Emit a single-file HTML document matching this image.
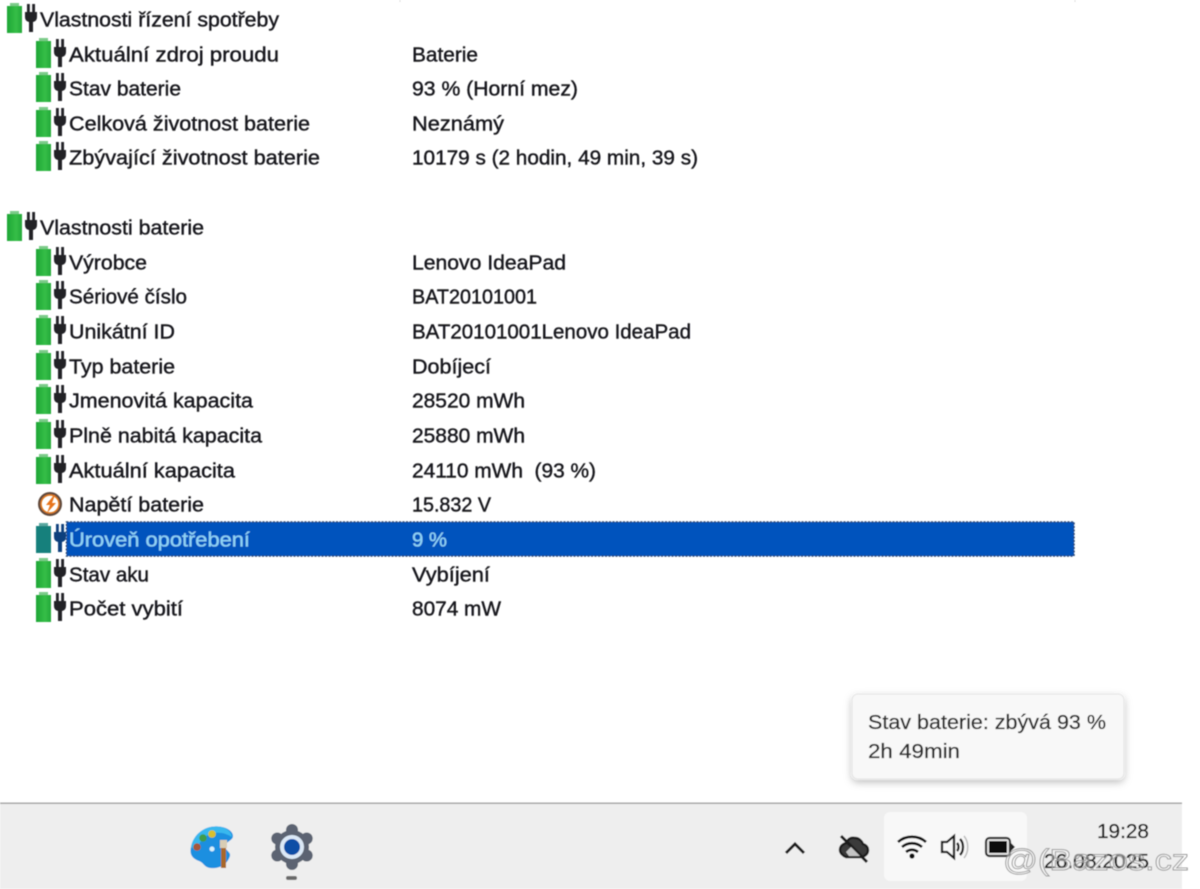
<!DOCTYPE html>
<html><head><meta charset="utf-8">
<style>
html,body{margin:0;padding:0;background:#fff;width:1200px;height:889px;overflow:hidden}
svg{display:block}
text{font-family:"Liberation Sans","DejaVu Sans",sans-serif;font-size:20px}
.t text{fill:#15151c;stroke:#15151c;stroke-width:.4}
.soft{filter:url(#b)}
</style></head><body>
<svg width="1200" height="889" viewBox="0 0 1200 889" xmlns="http://www.w3.org/2000/svg">
<defs>
<filter id="b" x="-2%" y="-2%" width="104%" height="104%"><feGaussianBlur stdDeviation="0.5"/></filter>
<filter id="sh" x="-10%" y="-20%" width="120%" height="150%"><feDropShadow dx="0" dy="3" stdDeviation="4" flood-color="#000" flood-opacity=".25"/></filter>
<linearGradient id="bg" x1="0" x2="1" y1="0" y2="0"><stop offset="0" stop-color="#1fa636"/><stop offset=".6" stop-color="#35be47"/><stop offset="1" stop-color="#25a93a"/></linearGradient>
<symbol id="ic" viewBox="0 0 32 32" width="32" height="32" overflow="visible">
<rect x="3" y="0" width="9" height="4" fill="#7ccb89"/>
<rect x="0" y="3" width="15" height="27" fill="url(#bg)"/>
<path d="M20 1h2.800v9H20zM25.200 1H28v9h-2.800z" fill="#222226"/>
<path d="M18 9h12v5q0 4-4 5v10h-4V19q-4-1-4-5z" fill="#222226"/>
</symbol>
<symbol id="ics" viewBox="0 0 32 32" width="32" height="32" overflow="visible">
<rect x="3" y="0" width="9" height="4" fill="#5aa7a0"/>
<rect x="0" y="3" width="15" height="27" fill="#16807c"/>
<path d="M20 1h2.800v9H20zM25.200 1H28v9h-2.800z" fill="#0f3f7d"/>
<path d="M18 9h12v5q0 4-4 5v10h-4V19q-4-1-4-5z" fill="#0f3f7d"/>
</symbol>
</defs>
<rect width="1200" height="889" fill="#fff"/>
<g class="soft">
<path d="M400 0v2M1075 0v2" stroke="#ddd"/>
<use href="#ic" x="7" y="3"/>
<use href="#ic" x="36" y="38"/>
<use href="#ic" x="36" y="72"/>
<use href="#ic" x="36" y="107"/>
<use href="#ic" x="36" y="141"/>
<use href="#ic" x="7" y="211"/>
<use href="#ic" x="36" y="246"/>
<use href="#ic" x="36" y="280"/>
<use href="#ic" x="36" y="315"/>
<use href="#ic" x="36" y="350"/>
<use href="#ic" x="36" y="384"/>
<use href="#ic" x="36" y="419"/>
<use href="#ic" x="36" y="454"/>
<use href="#ic" x="36" y="558"/>
<use href="#ic" x="36" y="592"/>
<!-- voltage icon -->
<circle cx="50" cy="504" r="10.500" fill="none" stroke="#5f4a3c" stroke-width="3"/>
<circle cx="50" cy="504" r="9" fill="none" stroke="#e0781e" stroke-width="1.500"/>
<path d="M54 495l-8 10h4l-3 8 9-10h-4l3-8z" fill="#e8751a"/>
<!-- selection -->
<rect x="66.500" y="522" width="1007.500" height="34" fill="#0453bd" stroke="#2d4a72" stroke-width="1.500" stroke-dasharray="2 1.500"/>
<use href="#ics" x="36" y="523"/>
<g class="t" transform="translate(0,.5)">
<text x="40" y="26" textLength="239" lengthAdjust="spacingAndGlyphs">Vlastnosti řízení spotřeby</text>
<text x="69" y="61" textLength="210" lengthAdjust="spacingAndGlyphs">Aktuální zdroj proudu</text>
<text x="69" y="95" textLength="112" lengthAdjust="spacingAndGlyphs">Stav baterie</text>
<text x="69" y="130" textLength="241" lengthAdjust="spacingAndGlyphs">Celková životnost baterie</text>
<text x="69" y="164" textLength="251" lengthAdjust="spacingAndGlyphs">Zbývající životnost baterie</text>
<text x="40" y="234" textLength="164" lengthAdjust="spacingAndGlyphs">Vlastnosti baterie</text>
<text x="69" y="269" textLength="78" lengthAdjust="spacingAndGlyphs">Výrobce</text>
<text x="69" y="303" textLength="118" lengthAdjust="spacingAndGlyphs">Sériové číslo</text>
<text x="69" y="338" textLength="106" lengthAdjust="spacingAndGlyphs">Unikátní ID</text>
<text x="69" y="373" textLength="106" lengthAdjust="spacingAndGlyphs">Typ baterie</text>
<text x="69" y="407" textLength="184" lengthAdjust="spacingAndGlyphs">Jmenovitá kapacita</text>
<text x="69" y="442" textLength="193" lengthAdjust="spacingAndGlyphs">Plně nabitá kapacita</text>
<text x="69" y="477" textLength="166" lengthAdjust="spacingAndGlyphs">Aktuální kapacita</text>
<text x="69" y="511" textLength="135" lengthAdjust="spacingAndGlyphs">Napětí baterie</text>
<text x="69" y="581" textLength="80" lengthAdjust="spacingAndGlyphs">Stav aku</text>
<text x="69" y="615" textLength="114" lengthAdjust="spacingAndGlyphs">Počet vybití</text>

<text x="412" y="61" textLength="66" lengthAdjust="spacingAndGlyphs">Baterie</text>
<text x="412" y="95" textLength="166" lengthAdjust="spacingAndGlyphs">93 % (Horní mez)</text>
<text x="412" y="130" textLength="92" lengthAdjust="spacingAndGlyphs">Neznámý</text>
<text x="412" y="164" textLength="286" lengthAdjust="spacingAndGlyphs">10179 s (2 hodin, 49 min, 39 s)</text>
<text x="412" y="269" textLength="154" lengthAdjust="spacingAndGlyphs">Lenovo IdeaPad</text>
<text x="412" y="303" textLength="125" lengthAdjust="spacingAndGlyphs">BAT20101001</text>
<text x="412" y="338" textLength="279" lengthAdjust="spacingAndGlyphs">BAT20101001Lenovo IdeaPad</text>
<text x="412" y="373" textLength="79" lengthAdjust="spacingAndGlyphs">Dobíjecí</text>
<text x="412" y="407" textLength="113" lengthAdjust="spacingAndGlyphs">28520 mWh</text>
<text x="412" y="442" textLength="113" lengthAdjust="spacingAndGlyphs">25880 mWh</text>
<text x="412" y="477" textLength="184" lengthAdjust="spacingAndGlyphs" xml:space="preserve">24110 mWh  (93 %)</text>
<text x="412" y="511" textLength="79" lengthAdjust="spacingAndGlyphs">15.832 V</text>
<text x="412" y="581" textLength="78" lengthAdjust="spacingAndGlyphs">Vybíjení</text>
<text x="412" y="615" textLength="89" lengthAdjust="spacingAndGlyphs">8074 mW</text>
</g>
<text x="69" y="546.500" textLength="181" lengthAdjust="spacingAndGlyphs" fill="#8fd3f5" stroke="#8fd3f5" stroke-width=".3">Úroveň opotřebení</text>
<text x="412" y="546.500" textLength="35" lengthAdjust="spacingAndGlyphs" fill="#8fd3f5" stroke="#8fd3f5" stroke-width=".3">9 %</text>

<!-- taskbar -->
<rect x="0" y="803" width="1182" height="86" fill="#eeeeee"/>
<rect x="0" y="802.500" width="1182" height="1.500" fill="#a8a8a8"/>
<rect x="884" y="812" width="143" height="69" rx="6" fill="#f8f8f8"/>

<!-- tooltip -->
<rect x="852" y="694" width="272" height="85" rx="6" fill="#f8f8f8" stroke="#e4e4e4" filter="url(#sh)"/>
<text x="868" y="729" textLength="238" lengthAdjust="spacingAndGlyphs" fill="#2e2e2e" stroke="#2e2e2e" stroke-width=".3">Stav baterie: zbývá 93 %</text>
<text x="868" y="758" textLength="92" lengthAdjust="spacingAndGlyphs" fill="#2e2e2e" stroke="#2e2e2e" stroke-width=".3">2h 49min</text>

<!-- palette -->
<path d="M222 827c-14-3-28 5-31 20-2 9 3 12 8 14 5 2 5 6 11 7 9 1 17-3 20-12 1-4-4-5-5-9-1-5 8-6 8-11 0-4-5-8-11-9z" fill="#1a8fe0"/>
<path d="M222 827c-14-3-28 5-31 20l6 4c2-12 12-20 25-18 5 1 8 3 10 4 0-4-5-9-10-10z" fill="#37b8ee"/>
<circle cx="197" cy="847" r="3.800" fill="#a5583a"/>
<circle cx="203" cy="838" r="3.800" fill="#3f9c4a"/>
<circle cx="212" cy="834" r="3.800" fill="#d9c02f"/>
<circle cx="212" cy="849" r="2.500" fill="#d8f1fd"/>
<rect x="220" y="840" width="7" height="8" fill="#d9cdb4"/>
<rect x="221" y="848" width="5" height="20" fill="#a8682a"/>
<!-- gear -->
<g fill="#5b6472">
<circle cx="292" cy="847" r="17"/>
<circle cx="292" cy="830" r="6"/><circle cx="292" cy="864" r="6"/>
<circle cx="277.300" cy="838.500" r="6"/><circle cx="306.700" cy="838.500" r="6"/>
<circle cx="277.300" cy="855.500" r="6"/><circle cx="306.700" cy="855.500" r="6"/>
</g>
<circle cx="292" cy="847" r="12" fill="#dbe8f6"/>
<circle cx="292" cy="847" r="8" fill="#0d4ea6"/>
<rect x="286" y="876" width="11" height="4" rx="2" fill="#6a6a6a"/>

<!-- chevron -->
<path d="M786 853l9-9 9 9" fill="none" stroke="#1a1a1a" stroke-width="3"/>
<!-- cloud off -->
<path d="M840 850c0-4 3-6 6-7 2-4 5-6 9-5 4 0 7 3 8 6 3 1 5 3 5 6 0 4-3 6-6 7h-16c-3-1-6-4-6-7z" fill="#3a3a3a" stroke="#1a1a1a" stroke-width="2.400"/>
<path d="M841 836l26 26" stroke="#1a1a1a" stroke-width="3"/>
<path d="M846 852l5-5 9 9h-11z" fill="#c4c4c4"/>
<!-- wifi -->
<g fill="none" stroke="#111" stroke-width="2.700">
<path d="M898 842c8-7 20-7 28 0"/><path d="M902 847c6-5 14-5 20 0"/><path d="M906 852c4-3 8-3 12 0"/>
</g>
<circle cx="912" cy="856" r="2.600" fill="#111"/>
<!-- speaker -->
<path d="M942 842h5l7-6v22l-7-6h-5z" fill="none" stroke="#1a1a1a" stroke-width="2.300"/>
<path d="M957 843c2 2 2 6 0 8M960 839c4 4 4 12 0 16" fill="none" stroke="#1a1a1a" stroke-width="2.300"/>
<path d="M964 836c5 6 5 16 0 22" fill="none" stroke="#bbb" stroke-width="1.500"/>
<!-- battery -->
<rect x="986" y="838" width="24" height="18" rx="3.500" fill="#e8e8e8" stroke="#2a2a2a" stroke-width="2.200"/>
<rect x="989" y="841" width="18" height="12" fill="#0c0c0c"/>
<path d="M1011 843l4 4-4 4z" fill="#222"/>

<!-- clock -->
<text x="1149" y="838" text-anchor="end" textLength="52" lengthAdjust="spacingAndGlyphs" fill="#1c1c1c" stroke="#1c1c1c" stroke-width=".3">19:28</text>
<text x="1149" y="868" text-anchor="end" textLength="105" lengthAdjust="spacingAndGlyphs" fill="#1c1c1c" stroke="#1c1c1c" stroke-width=".3">26.08.2025</text>
<!-- watermark -->
<text x="1003" y="870" textLength="186" lengthAdjust="spacingAndGlyphs" style="font-size:30px" fill="rgba(255,255,255,.35)" stroke="#9a9a9a" stroke-width=".9">@(Bazos.cz</text>
</g>
</svg>
</body></html>
